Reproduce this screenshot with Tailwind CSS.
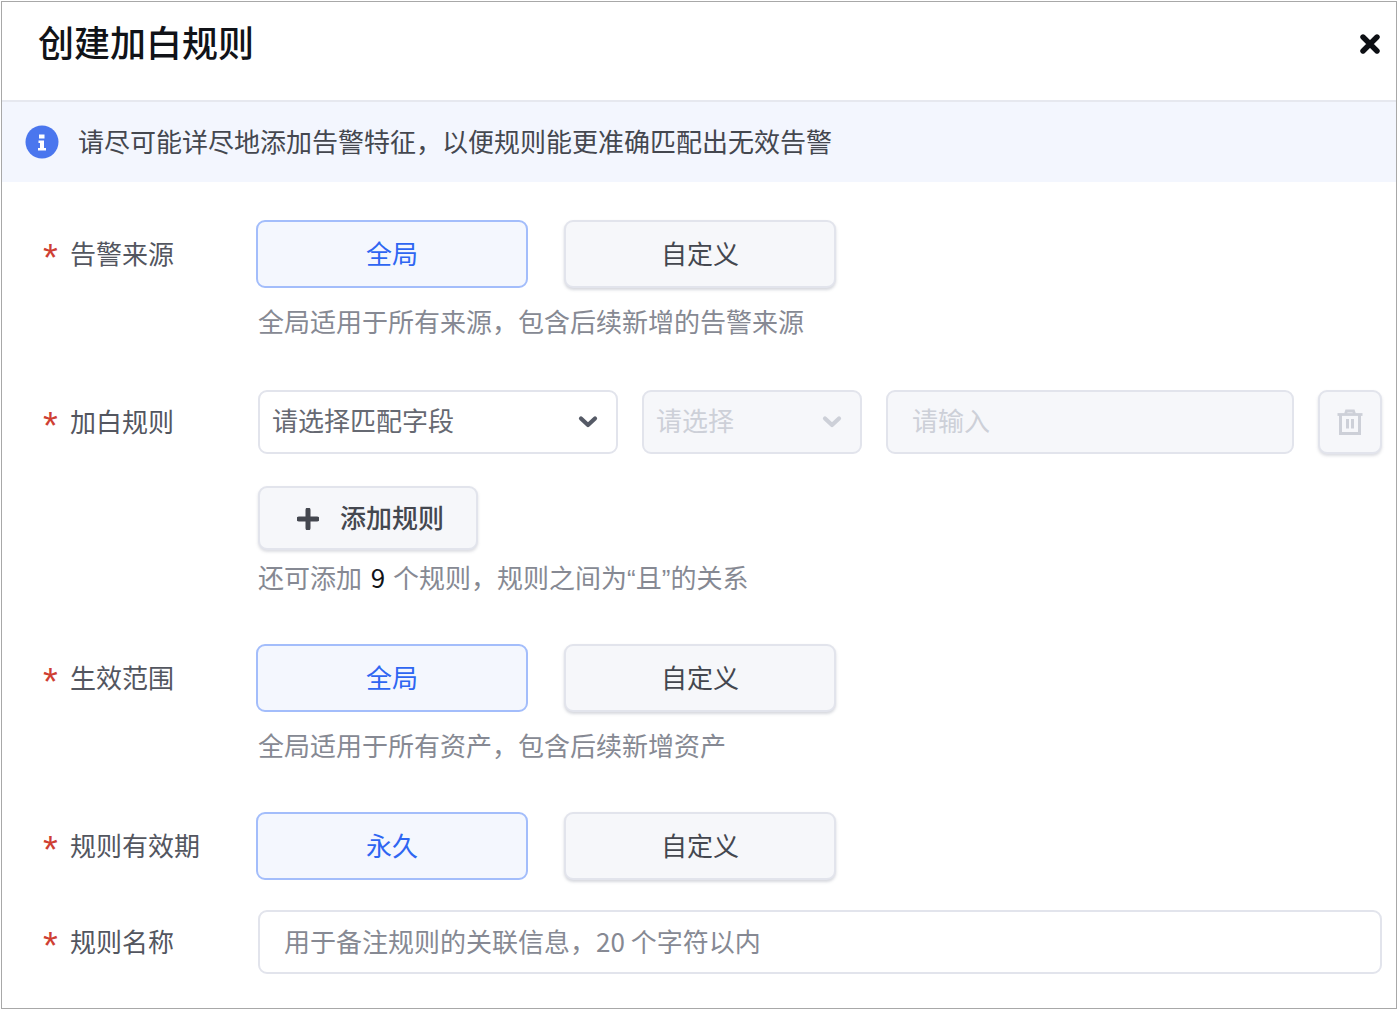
<!DOCTYPE html>
<html lang="zh-CN">

<head>
    <meta charset="UTF-8">
    <script src="https://cdn.jsdelivr.net/npm/@tailwindcss/browser@4"></script>
    <title>创建加白规则</title>
</head>

<body class="bg-white">
    <div class="w-[1398px] h-[1010px] bg-white overflow-hidden font-['Noto_Sans_CJK_SC','Noto_Sans',sans-serif]">
        <div class="mt-px ml-px w-[1396px] h-[1008px] border border-[#a8a8a8] flex flex-col overflow-hidden">
            <!-- header -->
            <div class="h-[100px] flex items-center justify-between pl-[36px] pr-[16px] border-b-2 border-[#e6e8ef] shrink-0">
                <h1 class="text-[36px] leading-[44px] font-medium text-[#111318] -mt-[20px]">创建加白规则</h1>
                <svg class="w-5 h-5 -mt-[14px]" viewBox="0 0 20 20"><path d="M3 3 L17 17 M17 3 L3 17" stroke="#0d0f14" stroke-width="5.400" stroke-linecap="round" /></svg>
            </div>

            <!-- alert -->
            <div class="h-[80px] flex items-center pl-[23px] bg-[#f3f6fe] shrink-0">
                <svg class="w-[34px] h-[34px] shrink-0" viewBox="0 0 34 34">
                    <circle cx="17" cy="17" r="16.5" fill="#4a76ee" />
                    <path d="M14 9.500h5.500v4h-5.500z M13.500 15.500h5.500v7.500h2v2.500h-8v-2.500h2v-5h-1.500z" fill="#fff" />
                </svg>
                <p class="ml-[19px] pb-[2px] text-[26px] leading-[34px] text-[#44474f]">请尽可能详尽地添加告警特征，以便规则能更准确匹配出无效告警</p>
            </div>

            <!-- form -->
            <div class="pt-[38px] pr-[14px]">
                <div class="flex">
                    <div class="w-[256px] h-[68px] pl-[41px] pb-[4px] flex items-center shrink-0 text-[26px] text-[#53565f]"><span class="w-[27px] h-[22px] text-[38px] leading-[34px] font-['Liberation_Sans'] text-[#cf3f33]">*</span>告警来源</div>
                    <div>
                        <div class="flex gap-[36px] -ml-[2px]">
                            <button class="w-[272px] h-[68px] pb-[4px] rounded-[9px] border-2 border-[#a3bdfb] bg-[#f4f7fe] text-[26px] text-[#2f66f2]">全局</button>
                            <button class="w-[272px] h-[68px] pb-[4px] rounded-[9px] border-2 border-[#e2e4ec] bg-[#f6f7fa] text-[26px] text-[#44474f] shadow-[0_2px_3px_rgba(120,125,145,0.3)]">自定义</button>
                        </div>
                        <p class="mt-[16px] text-[26px] leading-[34px] text-[#868993]">全局适用于所有来源，包含后续新增的告警来源</p>
                    </div>
                </div>

                <div class="flex mt-[52px]">
                    <div class="w-[256px] h-[64px] pl-[41px] pb-[4px] flex items-center shrink-0 text-[26px] text-[#53565f]"><span class="w-[27px] h-[22px] text-[38px] leading-[34px] font-['Liberation_Sans'] text-[#cf3f33]">*</span>加白规则</div>
                    <div class="flex-1">
                        <div class="flex gap-[24px]">
                            <div class="w-[360px] h-[64px] rounded-[9px] border-2 border-[#e2e4ec] pl-[13px] pr-[18px] flex items-center justify-between text-[26px] text-[#666972]"><span class="pb-[6px] -ml-px">请选择匹配字段</span>
                                <svg class="w-[20px] h-[14px]" viewBox="0 0 20 14"><path d="M3 3.500 L10 10 L17 3.500" fill="none" stroke="#555a66" stroke-width="4.200" stroke-linecap="round" stroke-linejoin="round" /></svg>
                            </div>
                            <div class="w-[220px] h-[64px] rounded-[9px] border-2 border-[#e2e4ec] bg-[#f6f7fa] pl-[13px] pr-[18px] flex items-center justify-between text-[26px] text-[#cdd0d8]"><span class="pb-[6px] -ml-px">请选择</span>
                                <svg class="w-[20px] h-[14px]" viewBox="0 0 20 14"><path d="M3 3.500 L10 10 L17 3.500" fill="none" stroke="#cdd0d8" stroke-width="4.200" stroke-linecap="round" stroke-linejoin="round" /></svg>
                            </div>
                            <div class="w-[408px] h-[64px] rounded-[9px] border-2 border-[#e2e4ec] bg-[#f6f7fa] pl-[24px] pb-[6px] flex items-center text-[26px] text-[#cdd0d8]">请输入</div>
                            <button class="w-[64px] h-[64px] rounded-[9px] border-2 border-[#e2e4ec] bg-[#f6f7fa] flex items-center justify-center shadow-[0_2px_3px_rgba(120,125,145,0.25)]">
                                <svg class="w-[26px] h-[26px]" viewBox="0 0 26 26" fill="none" stroke="#cdd0d8"><path d="M0.500 5.500h25" stroke-width="2.800" /><path d="M8.500 5 L9.500 2h7 L17.500 5" stroke-width="2.800" /><path d="M3.500 6v18.500h19V6" stroke-width="3" /><path d="M10.500 10v9.500M15.500 10v9.500" stroke-width="3" /></svg>
                            </button>
                        </div>
                        <button class="mt-[32px] w-[220px] h-[64px] rounded-[9px] border-2 border-[#e2e4ec] bg-[#f6f7fa] flex items-center pl-[37px] text-[26px] font-medium text-[#44474f] shadow-[0_2px_3px_rgba(120,125,145,0.25)]">
                            <svg class="w-[22px] h-[22px] mr-[21px] mt-[2px]" viewBox="0 0 22 22"><path d="M11 2v18M2 11h18" stroke="#44474f" stroke-width="5" stroke-linecap="round" /></svg><span class="pb-[4px]">添加规则</span>
                        </button>
                        <p class="mt-[10px] text-[26px] leading-[34px] text-[#868993]">还可添加 <span class="ml-[3px] mr-[2px] text-[#111318]">9</span> 个规则，规则之间为<span class="font-['Liberation_Sans']">“</span>且<span class="font-['Liberation_Sans']">”</span>的关系</p>
                    </div>
                </div>

                <div class="flex mt-[48px]">
                    <div class="w-[256px] h-[68px] pl-[41px] pb-[4px] flex items-center shrink-0 text-[26px] text-[#53565f]"><span class="w-[27px] h-[22px] text-[38px] leading-[34px] font-['Liberation_Sans'] text-[#cf3f33]">*</span>生效范围</div>
                    <div>
                        <div class="flex gap-[36px] -ml-[2px]">
                            <button class="w-[272px] h-[68px] pb-[4px] rounded-[9px] border-2 border-[#a3bdfb] bg-[#f4f7fe] text-[26px] text-[#2f66f2]">全局</button>
                            <button class="w-[272px] h-[68px] pb-[4px] rounded-[9px] border-2 border-[#e2e4ec] bg-[#f6f7fa] text-[26px] text-[#44474f] shadow-[0_2px_3px_rgba(120,125,145,0.3)]">自定义</button>
                        </div>
                        <p class="mt-[16px] text-[26px] leading-[34px] text-[#868993]">全局适用于所有资产，包含后续新增资产</p>
                    </div>
                </div>

                <div class="flex mt-[50px]">
                    <div class="w-[256px] h-[68px] pl-[41px] pb-[4px] flex items-center shrink-0 text-[26px] text-[#53565f]"><span class="w-[27px] h-[22px] text-[38px] leading-[34px] font-['Liberation_Sans'] text-[#cf3f33]">*</span>规则有效期</div>
                    <div class="flex gap-[36px] -ml-[2px]">
                        <button class="w-[272px] h-[68px] pb-[4px] rounded-[9px] border-2 border-[#a3bdfb] bg-[#f4f7fe] text-[26px] text-[#2f66f2]">永久</button>
                        <button class="w-[272px] h-[68px] pb-[4px] rounded-[9px] border-2 border-[#e2e4ec] bg-[#f6f7fa] text-[26px] text-[#44474f] shadow-[0_2px_3px_rgba(120,125,145,0.3)]">自定义</button>
                    </div>
                </div>

                <div class="flex mt-[30px]">
                    <div class="w-[256px] h-[64px] pl-[41px] pb-[4px] flex items-center shrink-0 text-[26px] text-[#53565f]"><span class="w-[27px] h-[22px] text-[38px] leading-[34px] font-['Liberation_Sans'] text-[#cf3f33]">*</span>规则名称</div>
                    <div class="flex-1 h-[64px] rounded-[9px] border-2 border-[#e2e4ec] pl-[24px] pb-[4px] flex items-center text-[26px] text-[#868993]">用于备注规则的关联信息，20 个字符以内</div>
                </div>
            </div>
        </div>
    </div>
</body>

</html>
